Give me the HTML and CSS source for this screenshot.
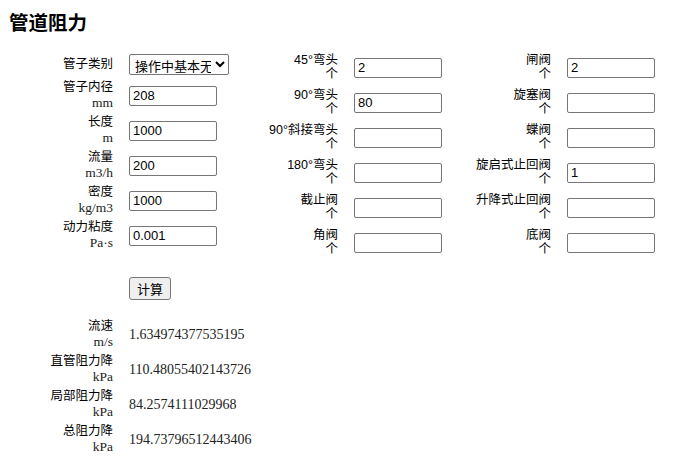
FILE: index.html
```html
<!DOCTYPE html>
<html lang="zh-CN">
<head>
    <meta charset="UTF-8">
    <meta name="viewport" content="width=device-width, initial-scale=1.0">
    <title>管道阻力</title>
    <link rel="stylesheet" href="styles.css">
</head>
<body>

<h1 class="title">管道阻力</h1>

<div class="form">
    <!-- 管子参数 -->
    <div class="col col-pipe">
        <div class="label">管子类别</div>
        <div><select id="pipe-type">
            <option>操作中基本无腐蚀的无缝钢管</option>
            <option>操作中有轻度腐蚀的无缝钢管</option>
            <option>操作中有显著腐蚀的无缝钢管</option>
        </select></div>

        <div class="label">管子内径<br><span class="unit">mm</span></div>
        <div><input type="text" value="208"></div>

        <div class="label">长度<br><span class="unit">m</span></div>
        <div><input type="text" value="1000"></div>

        <div class="label">流量<br><span class="unit">m3/h</span></div>
        <div><input type="text" value="200"></div>

        <div class="label">密度<br><span class="unit">kg/m3</span></div>
        <div><input type="text" value="1000"></div>

        <div class="label">动力粘度<br><span class="unit">Pa·s</span></div>
        <div><input type="text" value="0.001"></div>
    </div>

    <!-- 弯头 -->
    <div class="col col-fit">
        <div class="label">45°弯头<br>个</div>
        <div><input type="text" value="2"></div>

        <div class="label">90°弯头<br>个</div>
        <div><input type="text" value="80"></div>

        <div class="label">90°斜接弯头<br>个</div>
        <div><input type="text" value=""></div>

        <div class="label">180°弯头<br>个</div>
        <div><input type="text" value=""></div>

        <div class="label">截止阀<br>个</div>
        <div><input type="text" value=""></div>

        <div class="label">角阀<br>个</div>
        <div><input type="text" value=""></div>
    </div>

    <!-- 阀门 -->
    <div class="col col-fit">
        <div class="label">闸阀<br>个</div>
        <div><input type="text" value="2"></div>

        <div class="label">旋塞阀<br>个</div>
        <div><input type="text" value=""></div>

        <div class="label">蝶阀<br>个</div>
        <div><input type="text" value=""></div>

        <div class="label">旋启式止回阀<br>个</div>
        <div><input type="text" value="1"></div>

        <div class="label">升降式止回阀<br>个</div>
        <div><input type="text" value=""></div>

        <div class="label">底阀<br>个</div>
        <div><input type="text" value=""></div>
    </div>
</div>

<div class="actions">
    <button type="button">计算</button>
</div>

<div class="results">
    <div class="label">流速<br><span class="unit">m/s</span></div>
    <div class="value">1.634974377535195</div>

    <div class="label">直管阻力降<br><span class="unit">kPa</span></div>
    <div class="value">110.48055402143726</div>

    <div class="label">局部阻力降<br><span class="unit">kPa</span></div>
    <div class="value">84.2574111029968</div>

    <div class="label">总阻力降<br><span class="unit">kPa</span></div>
    <div class="value">194.73796512443406</div>
</div>

</body>
</html>
```

FILE: styles.css
```css
body {
    margin: 8px;
    font-family: 'Liberation Sans', 'Noto Sans CJK SC', sans-serif;
    font-size: 13px;
    color: #000;
    background: #fff;
}
.title {
    font-family: 'Noto Sans CJK SC', sans-serif;
    font-size: 19.5px;
    font-weight: bold;
    line-height: 28px;
    margin: 0 0 14px 1px;
}
.form {
    display: flex;
    gap: 16px;
    align-items: flex-start;
}
.col {
    display: grid;
    column-gap: 16px;
    grid-auto-rows: 35px;
    align-items: center;
}
.col-pipe {
    grid-template-columns: 105px 100px;
    grid-template-rows: 28px;
}
.col-fit {
    grid-template-columns: 93px 88px;
}
.label {
    text-align: right;
    font-size: 12.5px;
    line-height: 15px;
}
.col-fit .label {
    line-height: 13.5px;
}
.unit {
    font-family: 'Liberation Serif', serif;
    font-size: 13.5px;
    color: #222;
}
input {
    display: block;
    box-sizing: border-box;
    width: 88px;
    height: 20px;
    margin: 0;
    padding: 1px 3px;
    border: 1px solid #767676;
    border-radius: 2px;
    font-family: 'Liberation Sans', sans-serif;
    font-size: 13px;
    color: #000;
}
select {
    display: block;
    box-sizing: border-box;
    width: 100px;
    height: 21px;
    margin: 0;
    padding: 0 1px;
    border: 1px solid #767676;
    border-radius: 2px;
    background: #fff;
    font-family: 'Noto Sans CJK SC', sans-serif;
    font-size: 13px;
    color: #000;
}
.actions {
    margin: 17px 0 0 121px;
}
button {
    box-sizing: border-box;
    height: 23px;
    padding: 0 7px;
    border: 1px solid #767676;
    border-radius: 3px;
    background: #efefef;
    font-family: 'Noto Sans CJK SC', sans-serif;
    font-size: 13px;
    line-height: 19px;
    color: #000;
}
.results {
    display: grid;
    grid-template-columns: 105px auto;
    column-gap: 16px;
    grid-auto-rows: 35px;
    align-items: center;
    margin-top: 17px;
}
.value {
    font-family: 'Liberation Serif', serif;
    font-size: 14px;
    color: #222;
}
```
